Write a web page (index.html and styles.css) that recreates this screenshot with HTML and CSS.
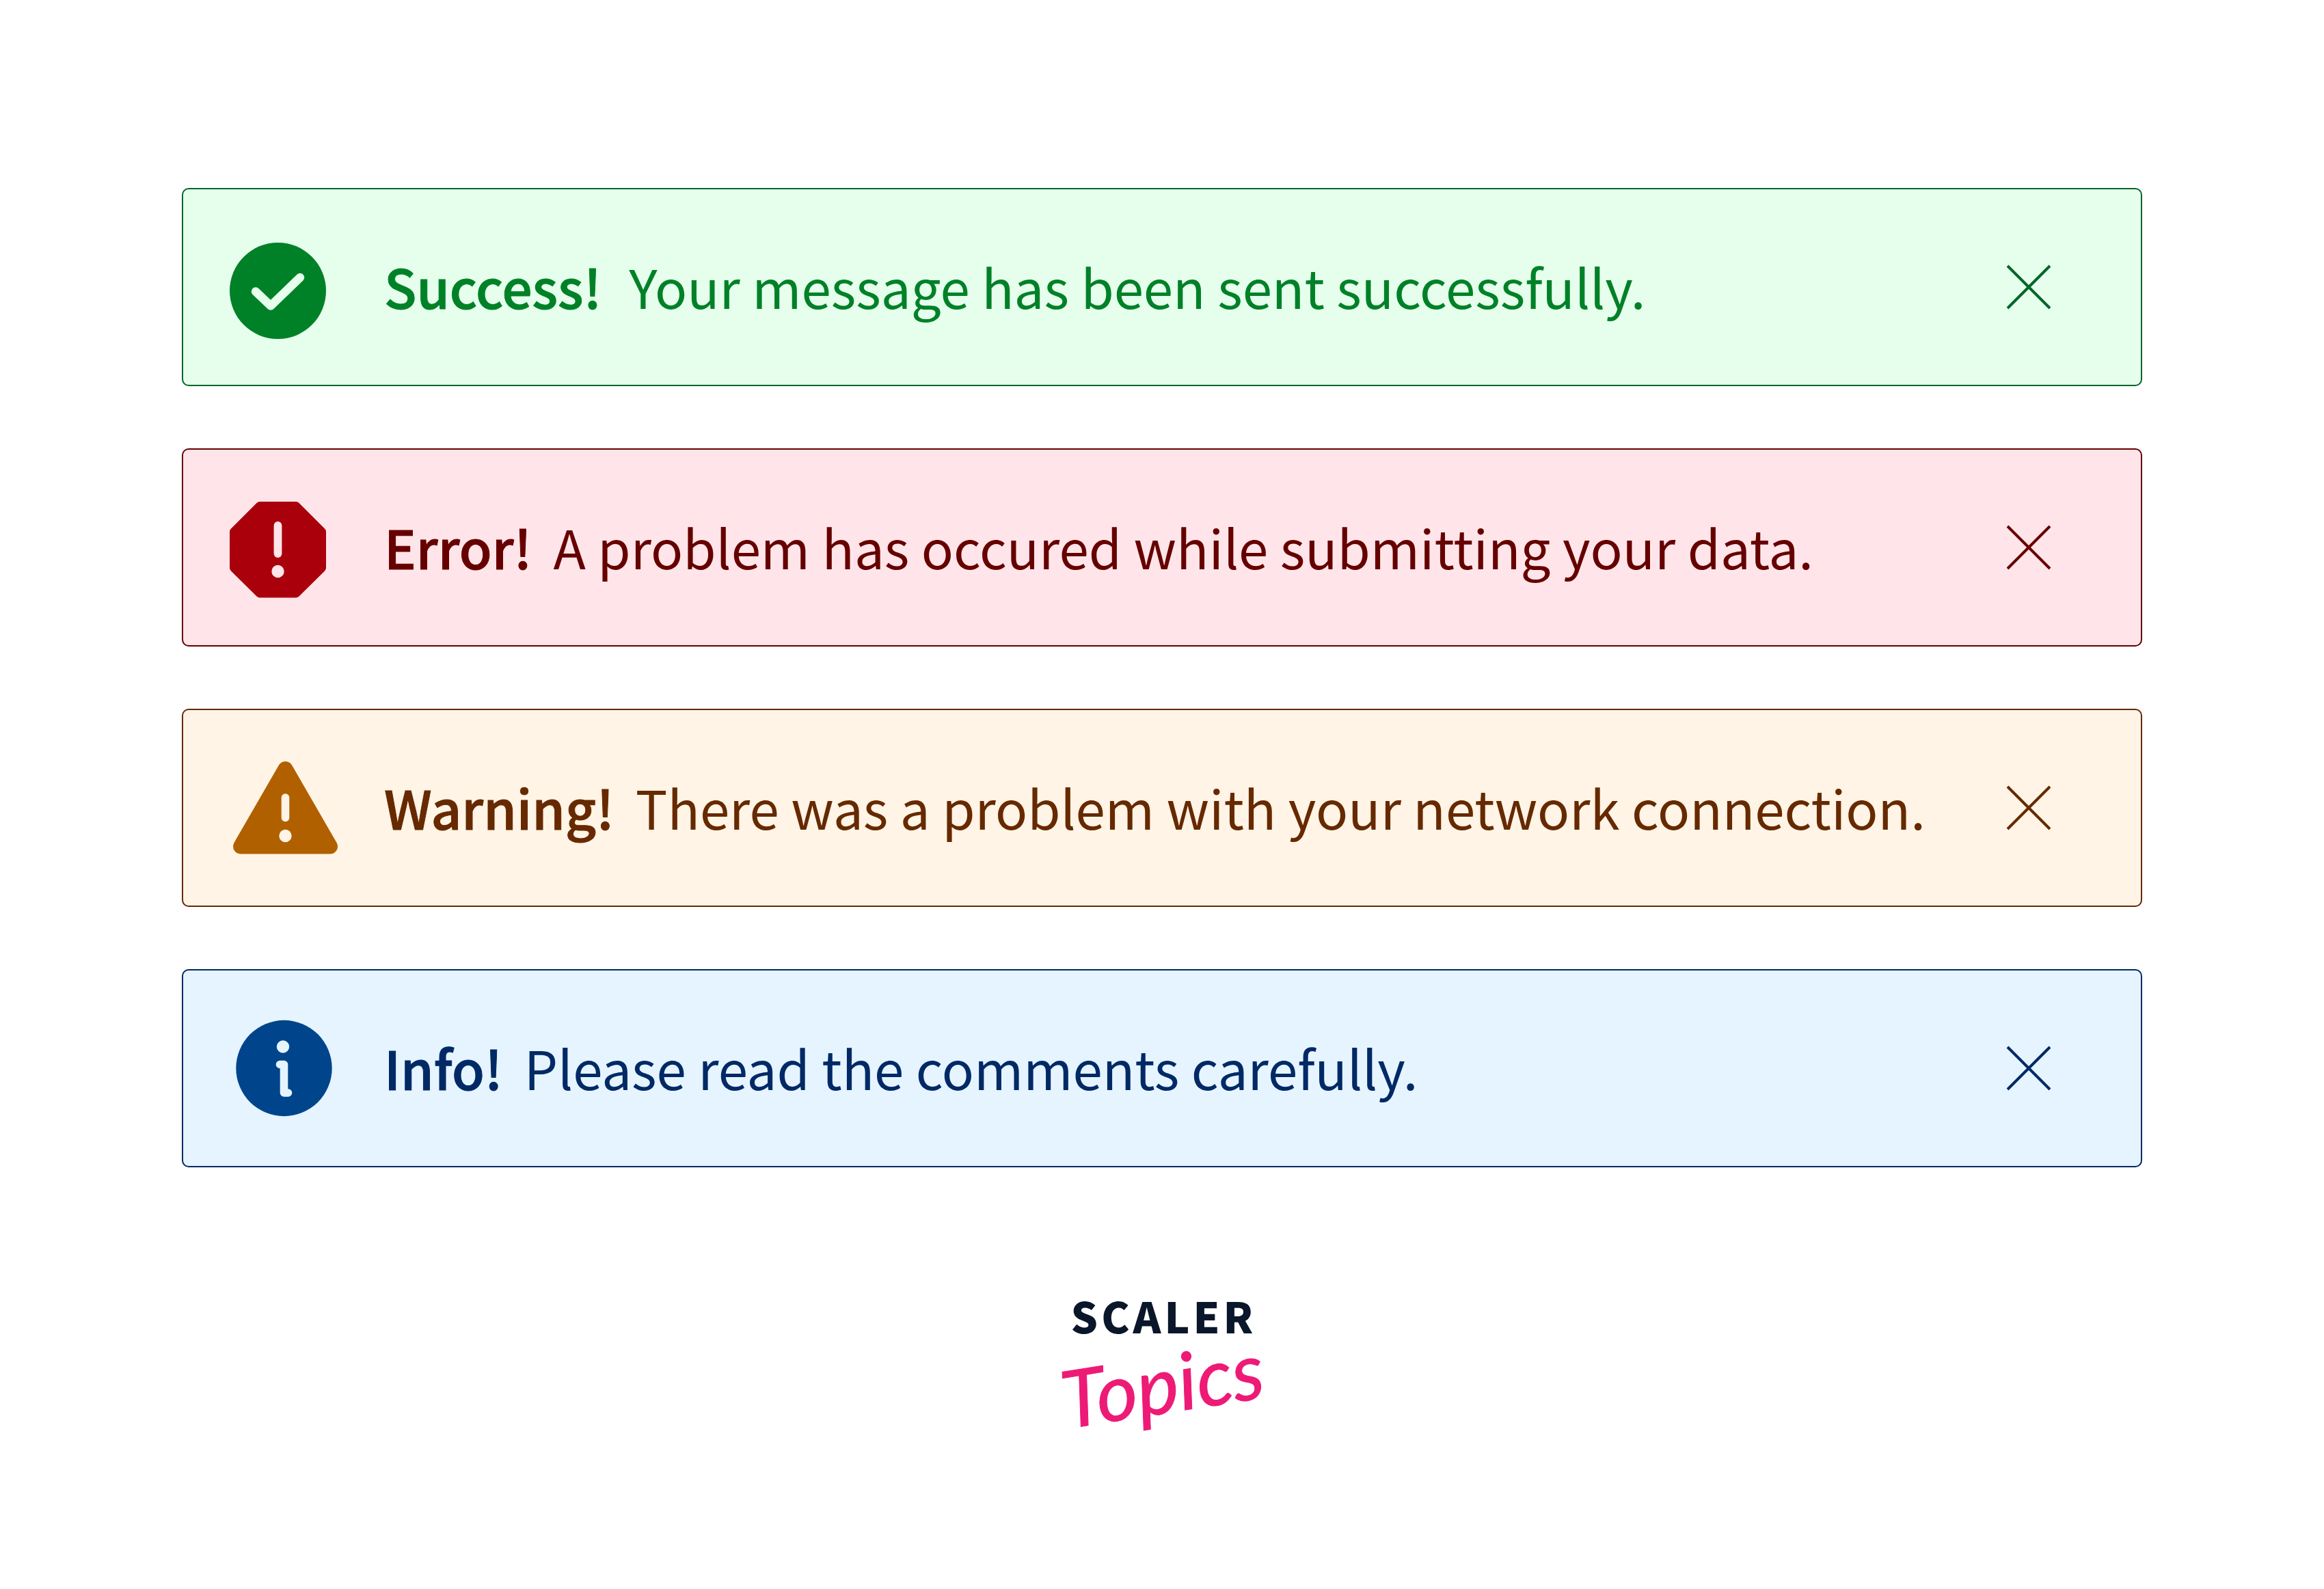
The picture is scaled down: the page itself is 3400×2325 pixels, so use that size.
FILE: index.html
```html
<!DOCTYPE html>
<html lang="en">
<head>
<meta charset="utf-8">
<meta name="viewport" content="width=device-width, initial-scale=1">
<title>Alert messages</title>
<link rel="stylesheet" href="styles.css">
</head>
<body>
<main class="page">
  <section class="alerts" aria-label="Alerts">
    <div class="alert alert-success" role="status">
      <svg class="alert-icon" viewBox="0 0 160 144" aria-hidden="true">
        <circle class="shape" cx="70.5" cy="77.5" r="70.5"/>
        <path class="mark-line" d="M38 78.5 60 99.5 103 58" stroke-width="12.5"/>
      </svg>
      <p class="alert-text"><strong class="alert-title">Success!</strong><span>Your message has been sent successfully.</span></p>
      <button class="alert-close" type="button" aria-label="Close"><svg viewBox="0 0 66 66" aria-hidden="true"><path d="M2 2 64 64M64 2 2 64"/></svg></button>
    </div>
    <div class="alert alert-error" role="alert">
      <svg class="alert-icon" viewBox="0 0 160 144" aria-hidden="true">
        <path class="shape" d="M44 5H97Q99.500 5 101.500 7L139 44.500Q141 46.500 141 49V102Q141 104.500 139 106.500L101.500 143.500Q99.500 145.500 97 145.500H44Q41.500 145.500 39.500 143.500L2 106.500Q0 104.500 0 102V49Q0 46.500 2 44.500L39.500 7Q41.500 5 44 5Z"/>
        <path class="mark-line" d="M70.5 40V81" stroke-width="11.8"/>
        <circle class="mark-dot" cx="70.5" cy="107" r="9.2"/>
      </svg>
      <p class="alert-text"><strong class="alert-title">Error!</strong><span>A problem has occured while submitting your data.</span></p>
      <button class="alert-close" type="button" aria-label="Close"><svg viewBox="0 0 66 66" aria-hidden="true"><path d="M2 2 64 64M64 2 2 64"/></svg></button>
    </div>
    <div class="alert alert-warning" role="alert">
      <svg class="alert-icon" viewBox="0 0 160 144" aria-hidden="true">
        <path class="shape shape-rounded" d="M81.500 15 16 128.500H147Z"/>
        <path class="mark-line" d="M81.500 57V86.500" stroke-width="11.6"/>
        <circle class="mark-dot" cx="81.500" cy="113" r="9.2"/>
      </svg>
      <p class="alert-text"><strong class="alert-title">Warning!</strong><span>There was a problem with your network connection.</span></p>
      <button class="alert-close" type="button" aria-label="Close"><svg viewBox="0 0 66 66" aria-hidden="true"><path d="M2 2 64 64M64 2 2 64"/></svg></button>
    </div>
    <div class="alert alert-info" role="status">
      <svg class="alert-icon" viewBox="0 0 160 144" aria-hidden="true">
        <circle class="shape" cx="79.500" cy="72" r="70.2"/>
        <circle class="mark-dot" cx="78" cy="40.5" r="9.2"/>
        <path class="mark-line" d="M73.500 66.500H79.500V108H85.500" stroke-width="11.6"/>
      </svg>
      <p class="alert-text"><strong class="alert-title">Info!</strong><span>Please read the comments carefully.</span></p>
      <button class="alert-close" type="button" aria-label="Close"><svg viewBox="0 0 66 66" aria-hidden="true"><path d="M2 2 64 64M64 2 2 64"/></svg></button>
    </div>
  </section>
  <footer class="brand">
    <span class="brand-name">SCALER</span>
    <span class="brand-sub">Topics</span>
  </footer>
</main>
</body>
</html>
```
FILE: styles.css
```css
* {
  box-sizing: border-box;
}

body {
  margin: 0;
  background: #fff;
  font-family: "Noto Sans CJK JP", "Noto Sans", sans-serif;
}

.page {
  padding: 275px 266px 160px;
}

.alerts {
  display: grid;
  gap: 91px;
}

.alert {
  --mark: #fff;
  display: flex;
  align-items: center;
  min-height: 290px;
  padding: 0 131px 0 68px;
  border: 2px solid currentColor;
  border-radius: 10px;
  background: var(--mark);
}

.alert-success {
  --mark: #e6ffed;
  --shape: #018127;
  color: #006628;
}

.alert-success .alert-text {
  gap: 40px;
  color: #018127;
}

.alert-error {
  --mark: #ffe5e9;
  --shape: #a9000c;
  color: #600;
}

.alert-warning {
  --mark: #fff4e5;
  --shape: #b16000;
  color: #662900;
}

.alert-info {
  --mark: #e5f4ff;
  --shape: #00458b;
  color: #002966;
}

.alert-icon {
  flex: none;
  width: 160px;
  height: 144px;
  margin-right: 66px;
  overflow: visible;
}

.shape {
  fill: var(--shape);
}

.shape-rounded {
  stroke: var(--shape);
  stroke-width: 22px;
  stroke-linejoin: round;
}

.mark-line {
  fill: none;
  stroke: var(--mark);
  stroke-linecap: round;
  stroke-linejoin: round;
}

.mark-dot {
  fill: var(--mark);
}

.alert-text {
  display: flex;
  flex: 1;
  align-items: baseline;
  gap: 31px;
  margin: 0;
  padding-bottom: 4px;
  font-size: 78px;
  line-height: 120px;
  white-space: nowrap;
}

.alert-title {
  font-weight: 500;
  -webkit-text-stroke: 1px currentColor;
}

.alert-close {
  flex: none;
  width: 66px;
  height: 66px;
  padding: 0;
  border: 0;
  background: none;
  color: inherit;
  cursor: pointer;
}

.alert-close svg {
  display: block;
  fill: none;
  stroke: currentColor;
  stroke-width: 4px;
}

.brand {
  display: flex;
  flex-direction: column;
  align-items: center;
  margin-top: 176px;
}

.brand-name {
  padding-left: 5px;
  color: #0a1629;
  font-size: 62px;
  font-weight: 900;
  line-height: 80px;
  letter-spacing: 5px;
}

.brand-sub {
  color: #ed1a76;
  font-family: "Lato", sans-serif;
  font-size: 116px;
  font-style: italic;
  line-height: 120px;
  transform: rotate(-9deg);
  -webkit-text-stroke: 1px currentColor;
}
```
